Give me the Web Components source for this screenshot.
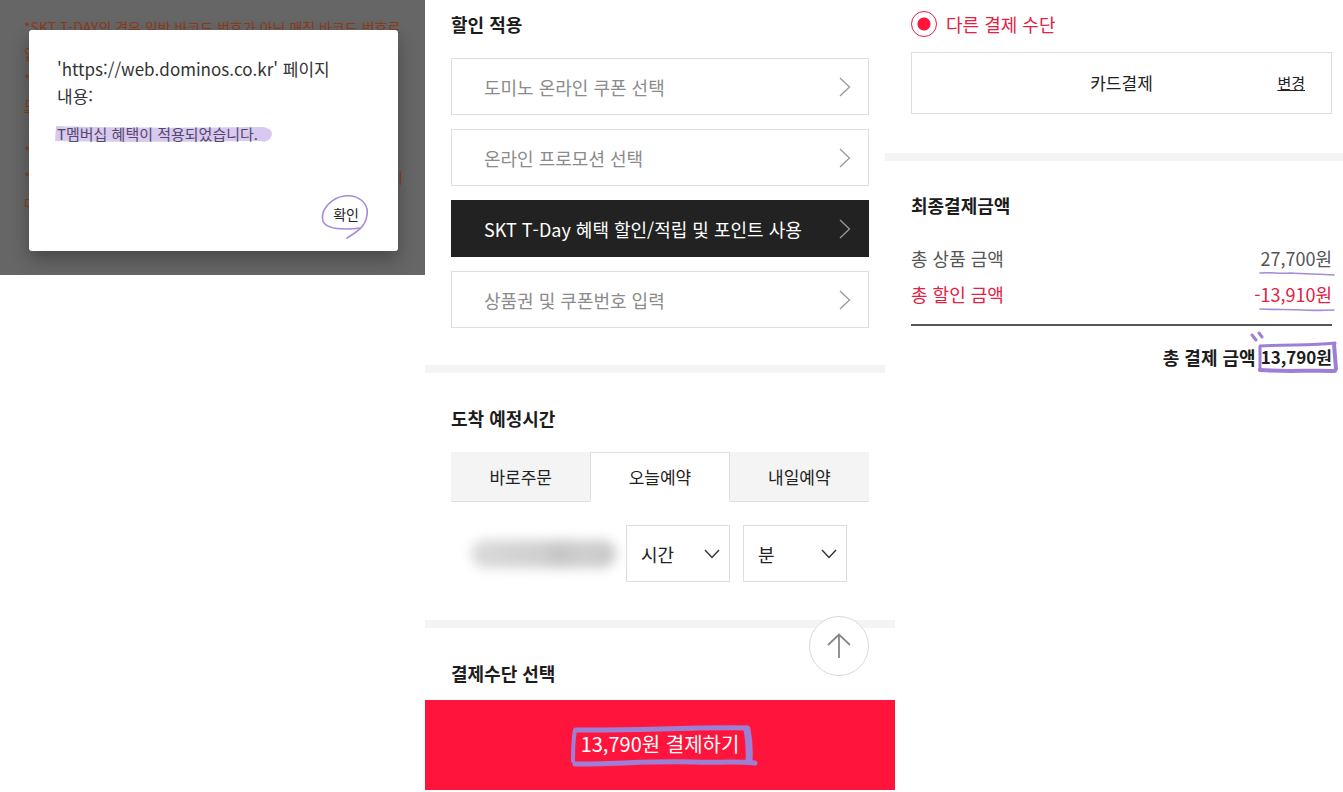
<!DOCTYPE html>
<html lang="ko">
<head>
<meta charset="utf-8">
<meta name="viewport" content="width=device-width, initial-scale=1">
<title>결제하기</title>
<style>
  body { margin: 0; background: #fff; color: #222; font-family: "Noto Sans CJK KR", sans-serif; font-size: 18px; line-height: 26px; }
</style>
</head>
<body>
<order-guide></order-guide>

<script>
const define = (name, html, setup) => {
  const template = document.createElement('template');
  template.innerHTML = html;
  customElements.define(name, class extends HTMLElement {
    constructor() {
      super();
      this.attachShadow({ mode: 'open' }).append(template.content.cloneNode(true));
    }
    connectedCallback() {
      if (setup) setup(this, this.shadowRoot);
    }
  });
};

define('section-title', `
<style>
  :host { display: block; }
  h2 { margin: 0; font-size: 18px; line-height: 26px; font-weight: 700; color: #1c1c1c; }
</style>
<h2><slot></slot></h2>`);

define('section-divider', `
<style>:host { display: block; height: 8px; background: #f4f4f4; }</style>`);

define('choice-row', `
<style>
  :host { display: block; }
  button { box-sizing: border-box; width: 100%; height: 57px; padding: 0 17px 0 32px; display: flex; align-items: center; justify-content: space-between;
    border: 1px solid #dedede; background: #fff; color: #8b8b8b; font: inherit; text-align: left; }
  svg { width: 12px; height: 20px; flex: none; fill: none; stroke: #999; stroke-width: 1.3; }
  :host([selected]) button { background: #222; border-color: #222; color: #fff; }
</style>
<button type="button"><span><slot></slot></span><svg viewBox="0 0 12 20"><path d="M1 1 10.5 10 1 19"/></svg></button>`);

define('time-tabs', `
<style>
  :host { display: block; }
  div { display: grid; grid-template-columns: repeat(3, 1fr); }
  button { box-sizing: border-box; height: 50px; padding: 0; border: 1px solid #f4f4f4; border-bottom-color: #dedede; background: #f4f4f4; color: #222;
    font: inherit; font-size: 17px; }
  button[aria-selected=true] { background: #fff; border-color: #dedede; border-bottom-color: #fff; }
</style>
<div role="tablist" aria-label="도착 예정시간">
  <button type="button" role="tab" aria-selected="false">바로주문</button>
  <button type="button" role="tab" aria-selected="true">오늘예약</button>
  <button type="button" role="tab" aria-selected="false">내일예약</button>
</div>`);

define('time-select', `
<style>
  :host { display: grid; width: 104px; height: 57px; align-items: center; }
  select, svg { grid-area: 1 / 1; }
  select { appearance: none; box-sizing: border-box; width: 100%; height: 100%; margin: 0; padding: 0 14px; border: 1px solid #dedede; border-radius: 0;
    background: #fff; color: #222; font: inherit; }
  svg { justify-self: end; margin-right: 10px; width: 16px; height: 10px; fill: none; stroke: #333; stroke-width: 1.4; pointer-events: none; }
</style>
<select><option></option></select>
<svg viewBox="0 0 16 10"><path d="M1 1 8 8.5 15 1"/></svg>`, (host, root) => {
  const label = host.getAttribute('label');
  root.querySelector('select').setAttribute('aria-label', label);
  root.querySelector('option').textContent = label;
});

define('browser-alert', `
<style>
  :host { display: grid; background: #666; height: 275px; overflow: hidden; }
  .page, .dialog { grid-area: 1 / 1; }
  .page { padding: 14px 22px 0 24px; color: #8d3b18; font-size: 14px; line-height: 26px; white-space: nowrap; }
  .page p { margin: 0 0 20px; }
  .page span { display: flex; justify-content: space-between; }
  .dialog { box-sizing: border-box; z-index: 1; margin: 30px 27px 24px 29px; padding: 25px 28px 24px; border-radius: 3px; background: #fff;
    box-shadow: 0 8px 18px rgba(0,0,0,.3); display: flex; flex-direction: column; color: #333; }
  .origin { margin: 0; font-size: 17px; line-height: 27px; }
  .message { margin: 12px 0 0; font-size: 15px; line-height: 26px; color: #55486a; }
  .message span { position: relative; z-index: 0; }
  .message svg { position: absolute; z-index: -1; left: -2px; top: 3px; width: 218px; height: 17px; fill: #d8c9f0; }
  .actions { margin-top: auto; display: flex; justify-content: flex-end; padding-right: 11px; }
  button { position: relative; border: 0; padding: 0; background: none; color: #222; font: inherit; font-size: 14px; line-height: 26px; }
  button svg { position: absolute; left: -13px; top: -7px; width: 50px; height: 48px; fill: none; stroke: #a68bd9; stroke-width: 1.6; stroke-linecap: round; }
</style>
<div class="page">
  <p><span>*SKT T-DAY의 경우 일반 바코드 번호가 아닌 매직 바코드 번호로</span><span>입</span><span>*</span><span><u>모</u></span></p>
  <p><span>*</span><span>*<b style="font-weight:400">니</b></span><span>다</span></p>
</div>
<div class="dialog" role="dialog" aria-label="알림">
  <p class="origin">'https://web.dominos.co.kr' 페이지<br>내용:</p>
  <p class="message"><span><svg viewBox="0 0 218 17"><path d="M1 0C55 2 150 2 208 1 215 2 219 6 216 11 214 15 209 17 207 15 170 15 90 17 0 15Z"/></svg>T멤버십 혜택이 적용되었습니다.</span></p>
  <div class="actions"><button type="button">확인<svg viewBox="0 0 50 48"><path d="M41 34C23 36 6 35 3 27 0 15 12 4 24 2 38 0 49 9 47 21 46 32 37 38 27 44"/></svg></button></div>
</div>`);

define('checkout-panel', `
<style>
  :host { display: block; }
  .block { padding: 0 16px 0 26px; }
  .discount { padding-top: 11px; padding-bottom: 37px; }
  .choices { margin-top: 21px; display: grid; gap: 14px; }
  .arrival { padding-top: 32px; padding-bottom: 38px; }
  time-tabs { margin-top: 21px; }
  .times { margin-top: 23px; padding-right: 22px; display: flex; }
  .date { flex: 1; display: flex; align-items: center; padding: 0 10px 0 20px; }
  .date i { flex: 1; height: 28px; border-radius: 14px; background: linear-gradient(90deg, #dadada, #cfcfcf 50%, #c6c6c6 60%, #cfcfcf 78%, #c8c8c8); filter: blur(6px); }
  time-select + time-select { margin-left: 13px; }
  .wide { margin-right: -10px; }
  .method { position: relative; padding-top: 32px; padding-bottom: 14px; }
  .top { position: absolute; right: 16px; top: -12px; box-sizing: border-box; width: 60px; height: 60px; padding: 0; border: 1px solid #d9d9d9; border-radius: 50%;
    background: #fff; display: grid; place-items: center; }
  .top svg { width: 24px; height: 26px; fill: none; stroke: #888; stroke-width: 1.8; }
  .pay { display: block; width: calc(100% + 10px); height: 90px; padding: 0 0 3px; border: 0; background: #ff143c; color: #fff; font: inherit; font-size: 20px; }
  .pay span { position: relative; z-index: 0; }
  .pay svg { position: absolute; z-index: -1; left: -12px; top: -6px; width: 190px; height: 46px; fill: none; stroke: #9d80d5; stroke-linecap: round; stroke-linejoin: round; }
</style>
<section class="block discount">
  <section-title>할인 적용</section-title>
  <div class="choices">
    <choice-row>도미노 온라인 쿠폰 선택</choice-row>
    <choice-row>온라인 프로모션 선택</choice-row>
    <choice-row selected>SKT T-Day 혜택 할인/적립 및 포인트 사용</choice-row>
    <choice-row>상품권 및 쿠폰번호 입력</choice-row>
  </div>
</section>
<section-divider></section-divider>
<section class="block arrival">
  <section-title>도착 예정시간</section-title>
  <time-tabs></time-tabs>
  <div class="times">
    <div class="date"><i></i></div>
    <time-select label="시간"></time-select>
    <time-select label="분"></time-select>
  </div>
</section>
<section-divider class="wide"></section-divider>
<section class="block method">
  <section-title>결제수단 선택</section-title>
  <button class="top" type="button" aria-label="맨 위로"><svg viewBox="0 0 24 26"><path d="M12 25V2M1 12 12 1.5 23 12"/></svg></button>
</section>
<button class="pay" type="button"><span>13,790원 결제하기<svg viewBox="0 0 190 46"><path stroke-width="4" d="M6 7C4 17 4 27 4 38"/><path stroke-width="5" d="M7 7C65 8 118 4 177 5"/><path stroke-width="7" d="M178 6Q181 22 180 38"/><path stroke-width="5" d="M6 41C45 41 82 38 125 39 148 40 165 38 186 40"/></svg></span></button>`);

define('payment-summary', `
<style>
  :host { display: block; }
  .block { padding: 0 11px 0 26px; }
  .method { padding-top: 11px; padding-bottom: 39px; }
  label { display: flex; align-items: center; gap: 9px; color: #e22143; }
  input { appearance: none; box-sizing: border-box; flex: none; width: 26px; height: 26px; margin: 0; border: 1px solid #e22143; border-radius: 50%;
    background: radial-gradient(circle, #ff143c 6px, transparent 7px); }
  .card { box-sizing: border-box; min-height: 62px; margin-top: 15px; padding: 0 26px; border: 1px solid #dedede; display: grid; grid-template-columns: 1fr auto 1fr; align-items: center; font-size: 17px; }
  .card span { grid-column: 2; }
  .card a { justify-self: end; color: #222; font-size: 15px; text-underline-offset: 1px; }
  .total { padding-top: 31px; }
  dl { margin: 22px 0 0; line-height: 36px; color: #555; }
  dl div { display: flex; justify-content: space-between; }
  dt, dd { margin: 0; }
  dd { position: relative; z-index: 0; }
  .off { color: #e22143; }
  dl .sum { justify-content: flex-end; gap: 5px; margin-top: 12px; padding-top: 13px; border-top: 2px solid #555; color: #1c1c1c; font-weight: 700; }
  .sum dd { font-size: 17px; }
  svg { position: absolute; z-index: -1; fill: none; stroke: #a68bd9; stroke-linecap: round; stroke-linejoin: round; }
  .line { right: -3px; bottom: 0; width: 76px; height: 5px; stroke-width: 1.6; }
  .frame { right: -6px; top: -8px; width: 88px; height: 44px; stroke: #9d80d5; }
</style>
<section class="block method">
  <label><input type="radio" name="method" checked>다른 결제 수단</label>
  <div class="card"><span>카드결제</span><a href="#change">변경</a></div>
</section>
<section-divider></section-divider>
<section class="block total">
  <section-title>최종결제금액</section-title>
  <dl>
    <div><dt>총 상품 금액</dt><dd>27,700원<svg class="line" viewBox="0 0 76 5"><path d="M1 2C12 1 20 3 31 2 48 3 62 3 75 4"/></svg></dd></div>
    <div class="off"><dt>총 할인 금액</dt><dd>-13,910원<svg class="line" viewBox="0 0 76 5"><path d="M1 2C20 3 30 2 44 3 56 4 66 3 75 3"/></svg></dd></div>
    <div class="sum"><dt>총 결제 금액</dt><dd>13,790원<svg class="frame" viewBox="0 0 88 44"><path stroke-width="3" d="M2 4 6 9M9 2 12 6"/><path stroke-width="3" d="M10 15V39M10 15C38 13 60 15 85 12"/><path stroke-width="4" d="M84 13 86 38M10 39C35 41 62 39 85 40"/></svg></dd></div>
  </dl>
</section>`);

define('order-guide', `
<style>
  :host { display: grid; grid-template-columns: 425fr 460fr 458fr; align-items: start; overflow-x: hidden; }
</style>
<browser-alert></browser-alert>
<checkout-panel></checkout-panel>
<payment-summary></payment-summary>`);
</script>
</body>
</html>
